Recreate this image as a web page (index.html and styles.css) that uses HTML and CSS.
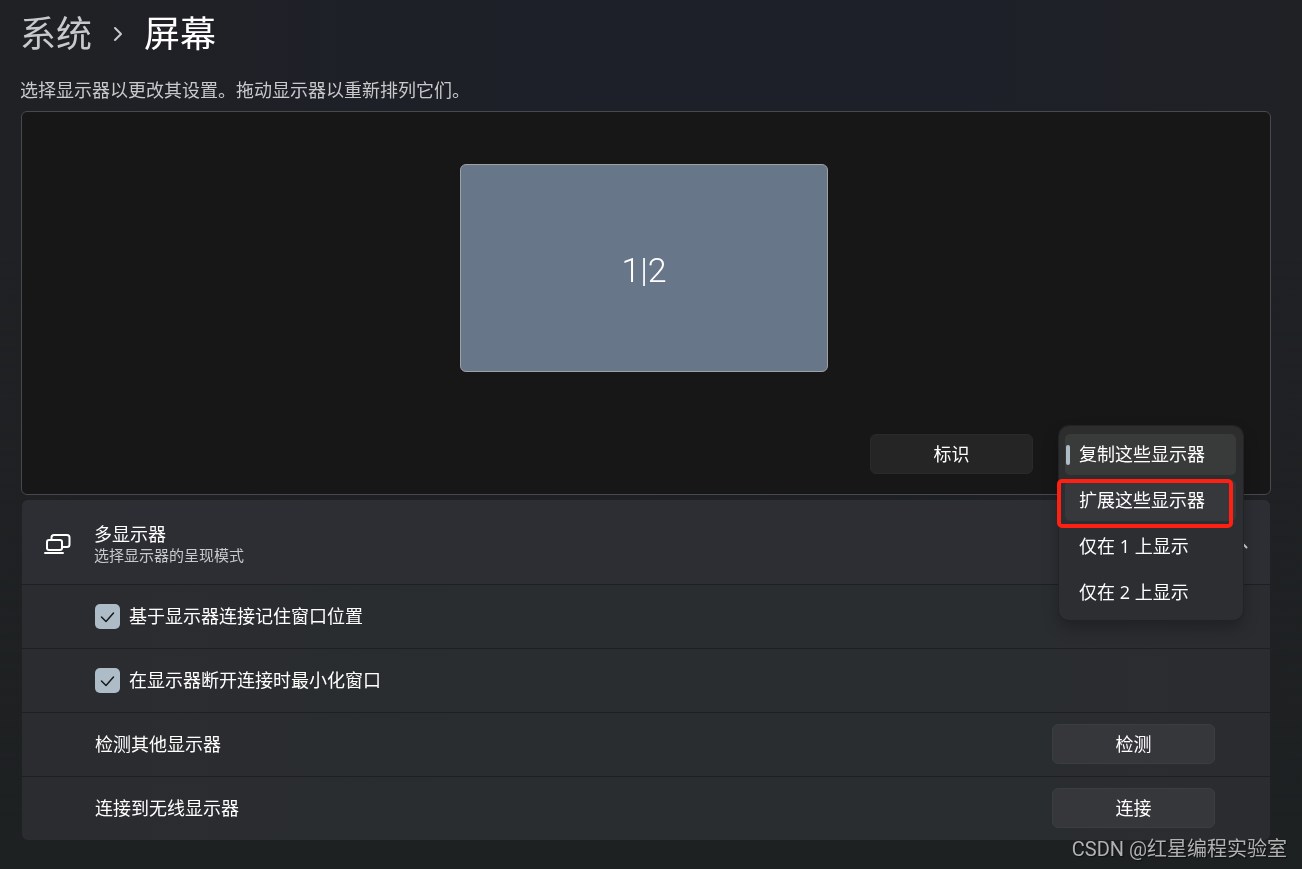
FILE: index.html
```html
<!DOCTYPE html>
<html lang="zh-CN">
  <head>
    <meta charset="UTF-8" />
    <meta name="viewport" content="width=device-width, initial-scale=1.0" />
    <title>屏幕</title>
    <link rel="stylesheet" href="styles.css">
  </head>
  <body>
    <main class="page">
      <nav class="breadcrumb">
        <a href="#">系统</a>
        <svg class="crumb-arrow" width="10" height="16" viewBox="0 0 10 16">
          <path d="M2 2l6 6-6 6" />
        </svg>
        <h1>屏幕</h1>
      </nav>
      <p class="hint">选择显示器以更改其设置。拖动显示器以重新排列它们。</p>

      <section class="arrange">
        <button type="button" class="monitor">1|2</button>
        <div class="arrange-actions">
          <button type="button" class="btn btn-identify">标识</button>
          <div class="mode">
            <div class="mode-menu">
              <button type="button" class="mode-item selected">复制这些显示器</button>
              <button type="button" class="mode-item hover">扩展这些显示器</button>
              <button type="button" class="mode-item">仅在 1 上显示</button>
              <button type="button" class="mode-item">仅在 2 上显示</button>
              <div class="highlight"></div>
            </div>
          </div>
        </div>
      </section>

      <section class="card">
        <div class="card-head">
          <svg class="card-icon" width="28" height="22" viewBox="0 0 28 22">
            <path d="M7.500 6V4.500a2.500 2.500 0 0 1 2.500-2.500h13a2.500 2.500 0 0 1 2.500 2.500v7a2.500 2.500 0 0 1-2.500 2.500h-4.500" />
            <rect x="3" y="7" width="15" height="10" rx="2" />
            <path d="M1 20h18" />
          </svg>
          <div class="card-title">
            <h2>多显示器</h2>
            <p>选择显示器的呈现模式</p>
          </div>
          <svg class="card-arrow" width="16" height="10" viewBox="0 0 16 10">
            <path d="M1.500 8.500 8 2l6.500 6.500" />
          </svg>
        </div>
        <div class="row">
          <label class="check">
            <input type="checkbox" checked />
            <svg width="25" height="25" viewBox="0 0 25 25">
              <path d="M6.500 13 11 17.500l7.500-8.500" />
            </svg>
            <span>基于显示器连接记住窗口位置</span>
          </label>
        </div>
        <div class="row">
          <label class="check">
            <input type="checkbox" checked />
            <svg width="25" height="25" viewBox="0 0 25 25">
              <path d="M6.500 13 11 17.500l7.500-8.500" />
            </svg>
            <span>在显示器断开连接时最小化窗口</span>
          </label>
        </div>
        <div class="row">
          <span>检测其他显示器</span>
          <button type="button" class="btn">检测</button>
        </div>
        <div class="row">
          <span>连接到无线显示器</span>
          <button type="button" class="btn">连接</button>
        </div>
      </section>
    </main>
    <div class="watermark">CSDN @红星编程实验室</div>
  </body>
</html>
```

FILE: styles.css
```css
* {
  box-sizing: border-box;
}
body {
  margin: 0;
  min-height: 100vh;
  font-family: "Open Sans", "Noto Sans CJK SC", sans-serif;
  font-size: 18px;
  line-height: 24px;
  color: #fff;
  background: linear-gradient(to right, #202124 0, #1e2028 30%, #1d2029 70%, #202125 100%);
}
body::before {
  content: "";
  position: fixed;
  inset: 0;
  z-index: -1;
  background: linear-gradient(to bottom, transparent 30%, #1e2122 95%);
}
h1,
h2,
p {
  margin: 0;
  font-weight: 400;
}
button {
  font: inherit;
  color: inherit;
  cursor: pointer;
}
svg {
  fill: none;
  stroke: #fff;
  stroke-linecap: round;
  stroke-linejoin: round;
}
.page {
  padding: 10px 31px 28px 20px;
}
.breadcrumb {
  display: flex;
  align-items: center;
  font-size: 36px;
  line-height: 48px;
}
.breadcrumb a {
  color: #c8c9cb;
  text-decoration: none;
}
.breadcrumb h1 {
  font-size: 36px;
}
.crumb-arrow {
  margin: 0 21px;
  stroke: #c8c9cb;
  stroke-width: 2;
}
.hint {
  padding: 20px 0 9px;
  color: #c8c9cb;
}

/* arrangement area */
.arrange {
  display: flex;
  flex-direction: column;
  align-items: center;
  margin-left: 1px;
  padding: 52px 27px 20px 23px;
  background: #171717;
  border: 1px solid #47494c;
  border-radius: 6px;
}
.monitor {
  width: 368px;
  height: 208px;
  padding: 4px 0 0;
  font-family: Roboto, sans-serif;
  font-size: 34px;
  font-weight: 300;
  background: #687689;
  border: 1px solid #a0a1a3;
  border-radius: 6px;
}
.arrange-actions {
  display: flex;
  align-self: flex-end;
  gap: 26px;
  margin-top: 62px;
}
.btn {
  width: 163px;
  height: 40px;
  padding: 0;
  background: #36373b;
  border: 1px solid #3c3d41;
  border-radius: 6px;
}
.btn-identify {
  background: #252525;
  border-color: #2a2a2a;
}
.mode {
  position: relative;
  width: 184px;
}
.mode-menu {
  position: absolute;
  top: -8px;
  left: 0;
  z-index: 2;
  display: flex;
  flex-direction: column;
  gap: 5px;
  width: 100%;
  padding: 8px 7px 7px 6px;
  background: linear-gradient(to bottom, #2d2d2d, #2c2e32 45%, #2d2e31);
  border-radius: 10px;
  box-shadow: 0 0 0 1px #222326, 0 8px 16px rgba(0, 0, 0, 0.25);
}
.mode-item {
  position: relative;
  height: 41px;
  padding: 0 0 1px 14px;
  text-align: left;
  background: none;
  border: none;
  border-radius: 5px;
}
.mode-item.selected {
  background: #393a3a;
}
.mode-item.hover {
  background: #37383b;
}
.mode-item.selected::before {
  content: "";
  position: absolute;
  top: 11px;
  left: 1px;
  width: 4px;
  height: 20px;
  background: #aebcc7;
  border-radius: 2px;
}
.highlight {
  position: absolute;
  top: 53px;
  left: -2px;
  width: 176px;
  height: 49px;
  border: 4px solid #fd2013;
  border-radius: 5px;
  pointer-events: none;
}

/* multiple displays */
.card {
  margin: 5px 1px 0 2px;
  background: linear-gradient(to right, #2b2c2f, #292d30 40%, #292d30 70%, #2b2c30);
  border-radius: 6px;
  box-shadow: 0 0 0 1px #1f2124;
}
.card-head {
  display: flex;
  align-items: center;
  height: 84px;
  padding: 3px 22px 0;
  background: #2c2e33;
  border-radius: 6px 6px 0 0;
}
.card-icon {
  stroke-width: 2;
}
.card-title {
  flex: 1;
  margin-left: 22px;
}
.card-title h2 {
  font-size: 18px;
  line-height: 22px;
}
.card-title p {
  font-size: 15px;
  line-height: 20px;
  color: #c8c9cb;
}
.card-arrow {
  stroke: #d0d0d0;
  stroke-width: 2;
}
.row {
  display: flex;
  align-items: center;
  justify-content: space-between;
  height: 64px;
  padding: 0 55px 1px 73px;
  border-top: 1px solid #1d1f22;
}
.check {
  display: grid;
  grid-template-columns: 25px auto;
  column-gap: 9px;
  align-items: center;
}
.check input,
.check svg {
  grid-area: 1 / 1;
  width: 25px;
  height: 25px;
  margin: 0;
}
.check input {
  appearance: none;
  background: #aebcc7;
  border-radius: 5px;
}
.check svg {
  stroke: #17191b;
  stroke-width: 1.5;
  pointer-events: none;
}
.check span {
  padding-bottom: 1px;
}
.check input:not(:checked) + svg {
  visibility: hidden;
}
.watermark {
  position: fixed;
  right: 15px;
  bottom: 8px;
  z-index: 3;
  font-family: Roboto, "Noto Sans CJK SC", sans-serif;
  font-size: 20px;
  color: #b0b1b2;
  text-shadow: 1px 1px 1px #111;
}
```
